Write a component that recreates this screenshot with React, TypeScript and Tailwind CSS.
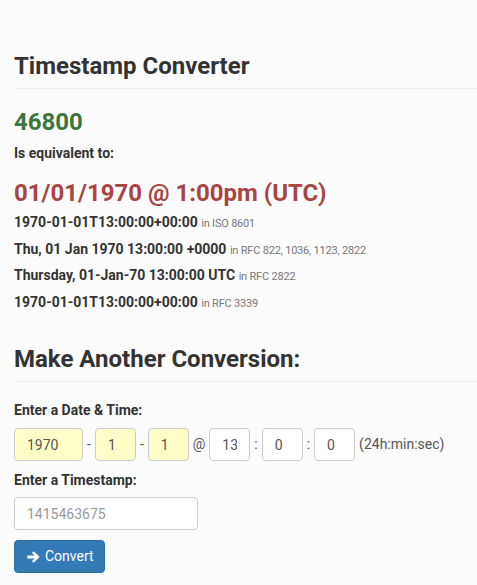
import React from "react";

const formats = [
  { value: "1970-01-01T13:00:00+00:00", note: "in ISO 8601" },
  { value: "Thu, 01 Jan 1970 13:00:00 +0000", note: "in RFC 822, 1036, 1123, 2822" },
  { value: "Thursday, 01-Jan-70 13:00:00 UTC", note: "in RFC 2822" },
  { value: "1970-01-01T13:00:00+00:00", note: "in RFC 3339" },
];

const ArrowIcon = () => (
  <svg width="13" height="12" viewBox="0 0 13 12" className="shrink-0">
    <path d="M6.8 0.3 L12.6 6 L6.8 11.7 L5 9.9 L7.6 7.4 H0.4 V4.6 H7.6 L5 2.1 Z" fill="white" />
  </svg>
);

const Box = ({ value, width, yellow }: { value: string; width: string; yellow?: boolean }) => (
  <input
    type="text"
    defaultValue={value}
    className={`${width} h-[33px] px-[12px] border border-[#ccc] rounded-[4px] text-[14px] text-[#555] outline-none ${
      yellow ? "bg-[#ffffc8]" : "bg-white"
    }`}
  />
);

const App = () => {
  return (
    <div
      className="min-h-[585px] bg-[#fcfcfc] pl-[14px] pt-[52px] text-[#333]"
      style={{ fontFamily: "Roboto, 'Liberation Sans', sans-serif" }}
    >
      <h1 className="text-[24px] leading-[28px] font-bold pb-[8px] border-b border-[#eee]">
        Timestamp Converter
      </h1>

      <div className="mt-[19px] text-[24px] leading-[28px] font-bold text-[#3c763d]">46800</div>
      <div className="mt-[8px] text-[14px] leading-[18px] font-bold">Is equivalent to:</div>

      <div className="mt-[17px] text-[24px] leading-[28px] font-bold text-[#a94442]">
        01/01/1970 @ 1:00pm (UTC)
      </div>

      <div className="mt-[3px]">
        {formats.map((f, i) => (
          <div key={i} className="text-[14px] leading-[25.5px]">
            <span className="font-bold">{f.value}</span>{" "}
            <span className="text-[11px] tracking-[-0.2px] text-[#777]">{f.note}</span>
          </div>
        ))}
      </div>

      <h2 className="mt-[29px] text-[24px] leading-[28px] font-bold pb-[8px] border-b border-[#eee]">
        Make Another Conversion:
      </h2>

      <div className="mt-[19px] text-[14px] leading-[18px] font-bold">Enter a Date &amp; Time:</div>
      <div className="mt-[9px] flex items-center gap-[4px] text-[14px] text-[#555]">
        <Box value="1970" width="w-[69px]" yellow />
        <span>-</span>
        <Box value="1" width="w-[41px]" yellow />
        <span>-</span>
        <Box value="1" width="w-[41px]" yellow />
        <span>@</span>
        <Box value="13" width="w-[41px]" />
        <span>:</span>
        <Box value="0" width="w-[41px]" />
        <span>:</span>
        <Box value="0" width="w-[41px]" />
        <span>(24h:min:sec)</span>
      </div>

      <div className="mt-[10px] text-[14px] leading-[18px] font-bold">Enter a Timestamp:</div>
      <input
        type="text"
        placeholder="1415463675"
        className="mt-[8px] block w-[184px] h-[33px] px-[12px] border border-[#ccc] rounded-[4px] bg-white text-[14px] text-[#555] placeholder:text-[#999] outline-none"
      />

      <button className="mt-[10px] flex items-center gap-[5px] h-[33px] w-[91px] px-[12px] bg-[#337ab7] border border-[#2e6da4] rounded-[4px] text-white text-[14px]">
        <ArrowIcon />
        Convert
      </button>
    </div>
  );
};

export default App;
